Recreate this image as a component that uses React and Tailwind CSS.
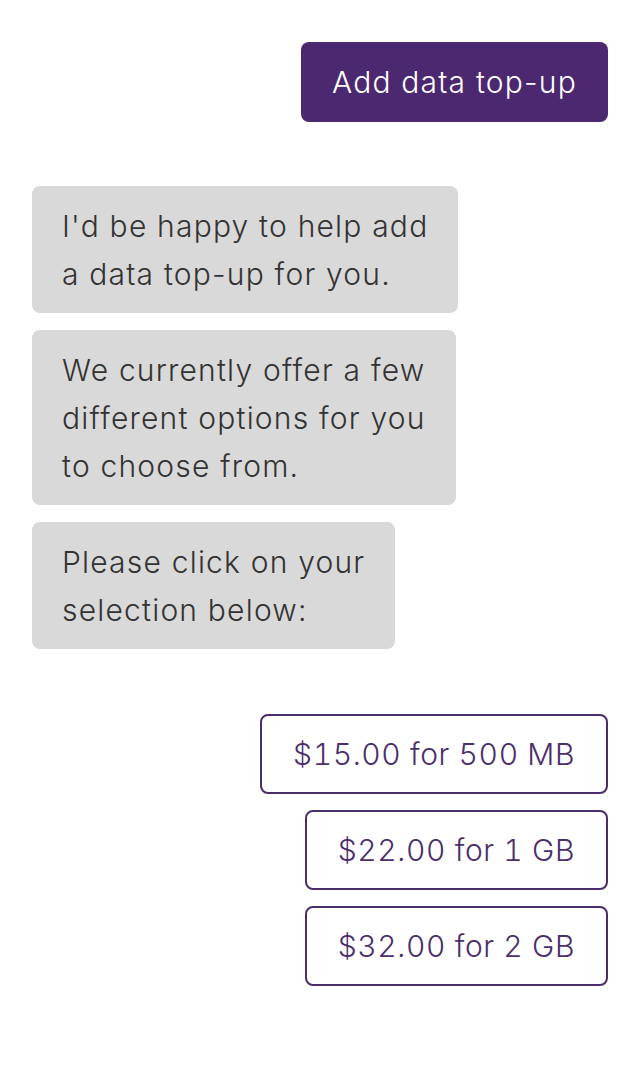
export default function App() {
  const font = { fontFamily: 'Inter, "Helvetica Neue", sans-serif' };
  const bubbles = [
    ["I'd be happy to help add", "a data top-up for you."],
    ["We currently offer a few", "different options for you", "to choose from."],
    ["Please click on your", "selection below:"],
  ];
  const options = ["$15.00 for 500 MB", "$22.00 for 1 GB", "$32.00 for 2 GB"];
  return (
    <div className="w-[640px] h-[1072px] bg-white px-8 pt-[42px] font-light tracking-[1.2px]" style={font}>
      <div className="flex justify-end">
        <div className="h-20 px-[31px] flex items-center rounded-lg bg-[#4b2870] text-white text-[30px] whitespace-nowrap">
          Add data top-up
        </div>
      </div>
      <div className="mt-16 flex flex-col items-start gap-[17px]">
        {bubbles.map((lines, i) => (
          <div key={i} className="w-fit rounded-lg bg-[#d9d9d9] pl-[30px] pr-[30px] pt-4 pb-[15px] text-[30px] leading-[48px] text-[#333333] whitespace-nowrap">
            {lines.map((l, j) => (
              <div key={j}>{l}</div>
            ))}
          </div>
        ))}
      </div>
      <div className="mt-[65px] flex flex-col items-end gap-4">
        {options.map((o) => (
          <div key={o} className="h-20 pl-[31px] pr-[31px] flex items-center rounded-lg border-2 border-[#4b2d6b] text-[#4a2f6b] text-[30px] tracking-[0.6px] tabular-nums whitespace-nowrap">
            {o}
          </div>
        ))}
      </div>
    </div>
  );
}
